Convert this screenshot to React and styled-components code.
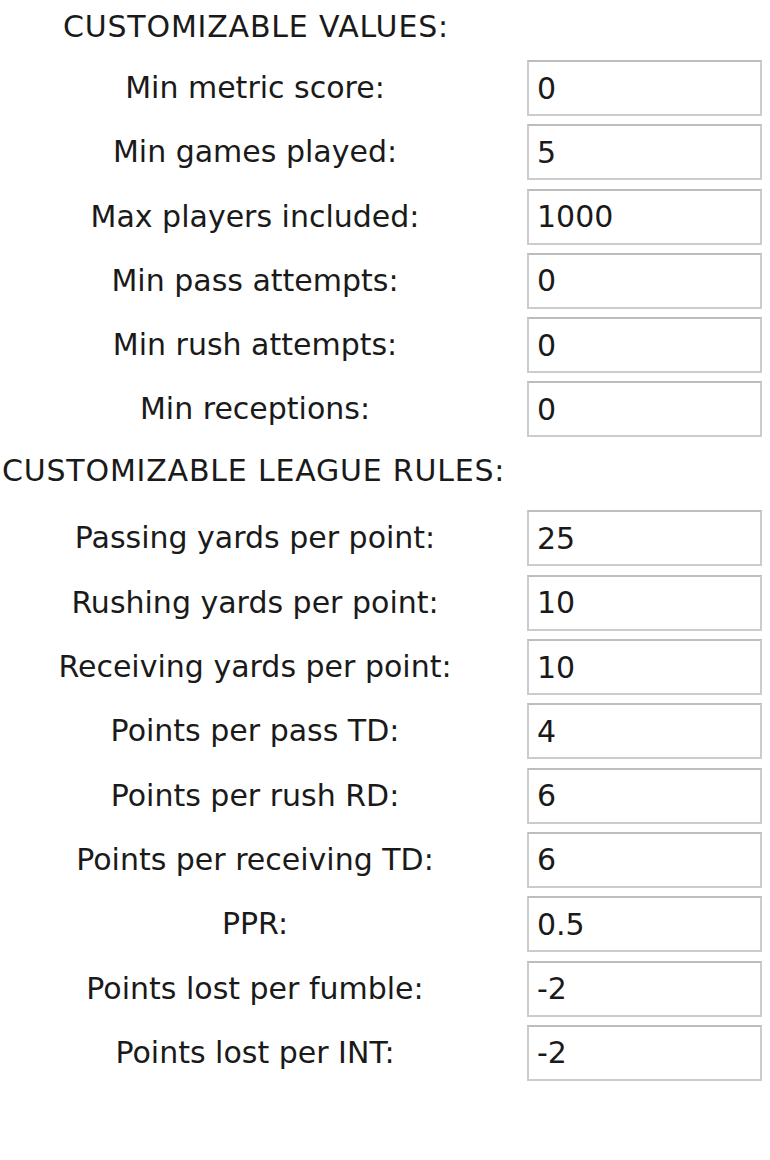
import React from "react";
import styled, { createGlobalStyle } from "styled-components";

const GlobalStyle = createGlobalStyle`
    html, body {
        margin: 0;
        padding: 0;
        background: #ffffff;
    }
    body {
        font-family: "DejaVu Sans", "Liberation Sans", sans-serif;
        color: #1a1a1a;
    }
`;

const Page = styled.div`
    width: 770px;
    padding-top: 9px;
    display: flex;
    flex-direction: column;
`;

const Section = styled.section`
    display: flex;
    flex-direction: column;
    margin-bottom: ${(p) => p.$after || 0}px;
`;

const Heading = styled.div`
    padding-left: ${(p) => p.$indent}px;
    font-size: 30px;
    line-height: 36px;
    letter-spacing: 0.8px;
    margin-bottom: ${(p) => p.$gap}px;
`;

const Rows = styled.div`
    display: flex;
    flex-direction: column;
    gap: 8.3px;
`;

const Row = styled.div`
    display: grid;
    grid-template-columns: 510px 235px;
    column-gap: 17px;
    align-items: center;
`;

const Label = styled.label`
    text-align: center;
    font-size: 30px;
    line-height: 36px;
`;

const Field = styled.input`
    box-sizing: border-box;
    height: 56px;
    width: 235px;
    margin: 0;
    padding: 0 0 0 8px;
    border: 2px solid #cccccc;
    border-top-color: #bdbdbd;
    background: #ffffff;
    font-family: "DejaVu Sans", "Liberation Sans", sans-serif;
    font-size: 30px;
    color: #1a1a1a;
    outline: none;
`;

const values = [
    ["Min metric score:", "0"],
    ["Min games played:", "5"],
    ["Max players included:", "1000"],
    ["Min pass attempts:", "0"],
    ["Min rush attempts:", "0"],
    ["Min receptions:", "0"],
];

const rules = [
    ["Passing yards per point:", "25"],
    ["Rushing yards per point:", "10"],
    ["Receiving yards per point:", "10"],
    ["Points per pass TD:", "4"],
    ["Points per rush RD:", "6"],
    ["Points per receiving TD:", "6"],
    ["PPR:", "0.5"],
    ["Points lost per fumble:", "-2"],
    ["Points lost per INT:", "-2"],
];

function SettingRows({ items }) {
    return (
        <Rows>
            {items.map(([label, value]) => (
                <Row key={label}>
                    <Label>{label}</Label>
                    <Field type="text" defaultValue={value} />
                </Row>
            ))}
        </Rows>
    );
}

export default function App() {
    return (
        <>
            <GlobalStyle />
            <Page>
                <Section $after={16}>
                    <Heading $indent={63} $gap={15}>
                        CUSTOMIZABLE VALUES:
                    </Heading>
                    <SettingRows items={values} />
                </Section>
                <Section>
                    <Heading $indent={2} $gap={21}>
                        CUSTOMIZABLE LEAGUE RULES:
                    </Heading>
                    <SettingRows items={rules} />
                </Section>
            </Page>
        </>
    );
}
